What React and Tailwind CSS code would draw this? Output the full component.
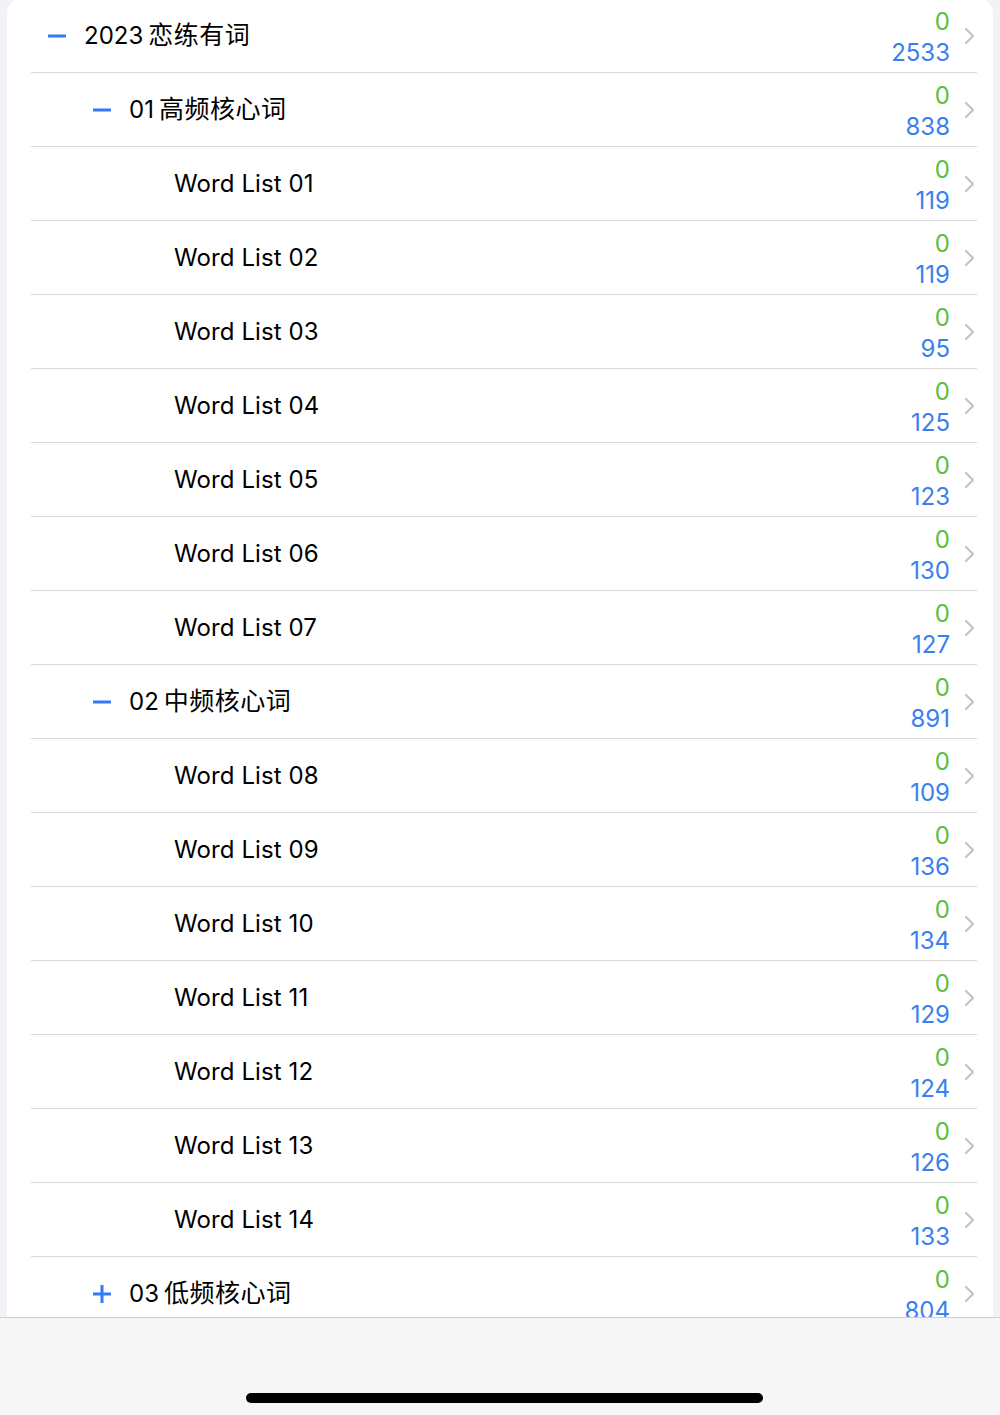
import React from "react";

const rows = [
  { level: 0, icon: "minus", num: "2023", cjk: "恋练有词", a: "0", b: "2533" },
  { level: 1, icon: "minus", num: "01", cjk: "高频核心词", a: "0", b: "838" },
  { level: 2, label: "Word List 01", a: "0", b: "119" },
  { level: 2, label: "Word List 02", a: "0", b: "119" },
  { level: 2, label: "Word List 03", a: "0", b: "95" },
  { level: 2, label: "Word List 04", a: "0", b: "125" },
  { level: 2, label: "Word List 05", a: "0", b: "123" },
  { level: 2, label: "Word List 06", a: "0", b: "130" },
  { level: 2, label: "Word List 07", a: "0", b: "127" },
  { level: 1, icon: "minus", num: "02", cjk: "中频核心词", a: "0", b: "891" },
  { level: 2, label: "Word List 08", a: "0", b: "109" },
  { level: 2, label: "Word List 09", a: "0", b: "136" },
  { level: 2, label: "Word List 10", a: "0", b: "134" },
  { level: 2, label: "Word List 11", a: "0", b: "129" },
  { level: 2, label: "Word List 12", a: "0", b: "124" },
  { level: 2, label: "Word List 13", a: "0", b: "126" },
  { level: 2, label: "Word List 14", a: "0", b: "133" },
  { level: 1, icon: "plus", num: "03", cjk: "低频核心词", a: "0", b: "804" },
];

const padByLevel = ["pl-[41px]", "pl-[86px]", "pl-[167px]"];

function Icon({ type }) {
  if (type === "plus") {
    return (
      <svg width="18" height="18" viewBox="0 0 18 18" className="shrink-0">
        <rect x="0" y="7.5" width="18" height="3" rx="0.5" fill="#3478f6" />
        <rect x="7.5" y="0" width="3" height="18" rx="0.5" fill="#3478f6" />
      </svg>
    );
  }
  return (
    <svg width="18" height="18" viewBox="0 0 18 18" className="shrink-0">
      <rect x="0" y="7.5" width="18" height="3" rx="0.5" fill="#3478f6" />
    </svg>
  );
}

function Chevron() {
  return (
    <svg width="11" height="18" viewBox="0 0 11 18" className="shrink-0">
      <path d="M2 2 L9 9 L2 16" fill="none" stroke="#c4c4c7" strokeWidth="2.2" strokeLinecap="round" strokeLinejoin="round" />
    </svg>
  );
}

function Row({ r }) {
  return (
    <div className="relative h-[74px] flex items-center pr-[18px]">
      <div className={`flex items-center flex-1 ${padByLevel[r.level]}`}>
        {r.icon && <Icon type={r.icon} />}
        {r.label ? (
          <span className="text-[24px] text-black tracking-[0.1px]">{r.label}</span>
        ) : (
          <span className="ml-[18px] flex items-center text-black">
            <span className="text-[24px]">{r.num}</span>
            <span className="ml-[5px] text-[25px] tracking-[0.5px]">{r.cjk}</span>
          </span>
        )}
      </div>
      <div className="flex flex-col items-end leading-[31px] text-[24px] mr-[14px] mt-[2px]">
        <span className="text-[#5cbf3b]">{r.a}</span>
        <span className="text-[#3a7ff0]">{r.b}</span>
      </div>
      <Chevron />
      <div className="absolute left-[24px] right-[16px] bottom-0 h-px bg-[#d9d9dc]" />
    </div>
  );
}

export default function App() {
  return (
    <div
      className="w-[1000px] h-[1415px] bg-[#f2f2f7] flex flex-col overflow-hidden"
      style={{ fontFamily: 'Inter, "Noto Sans CJK SC", sans-serif' }}
    >
      <div className="flex-1 min-h-0 overflow-hidden px-[7px]">
        <div className="bg-white rounded-t-[14px] -mt-px">
          {rows.map((r, i) => (
            <Row key={i} r={r} />
          ))}
        </div>
      </div>
      <div className="h-[98px] shrink-0 bg-[#f6f6f6] border-t border-[#cfcfd2] flex justify-center">
        <div className="mt-[75px] ml-[8px] w-[517px] h-[10px] rounded-full bg-black" />
      </div>
    </div>
  );
}
